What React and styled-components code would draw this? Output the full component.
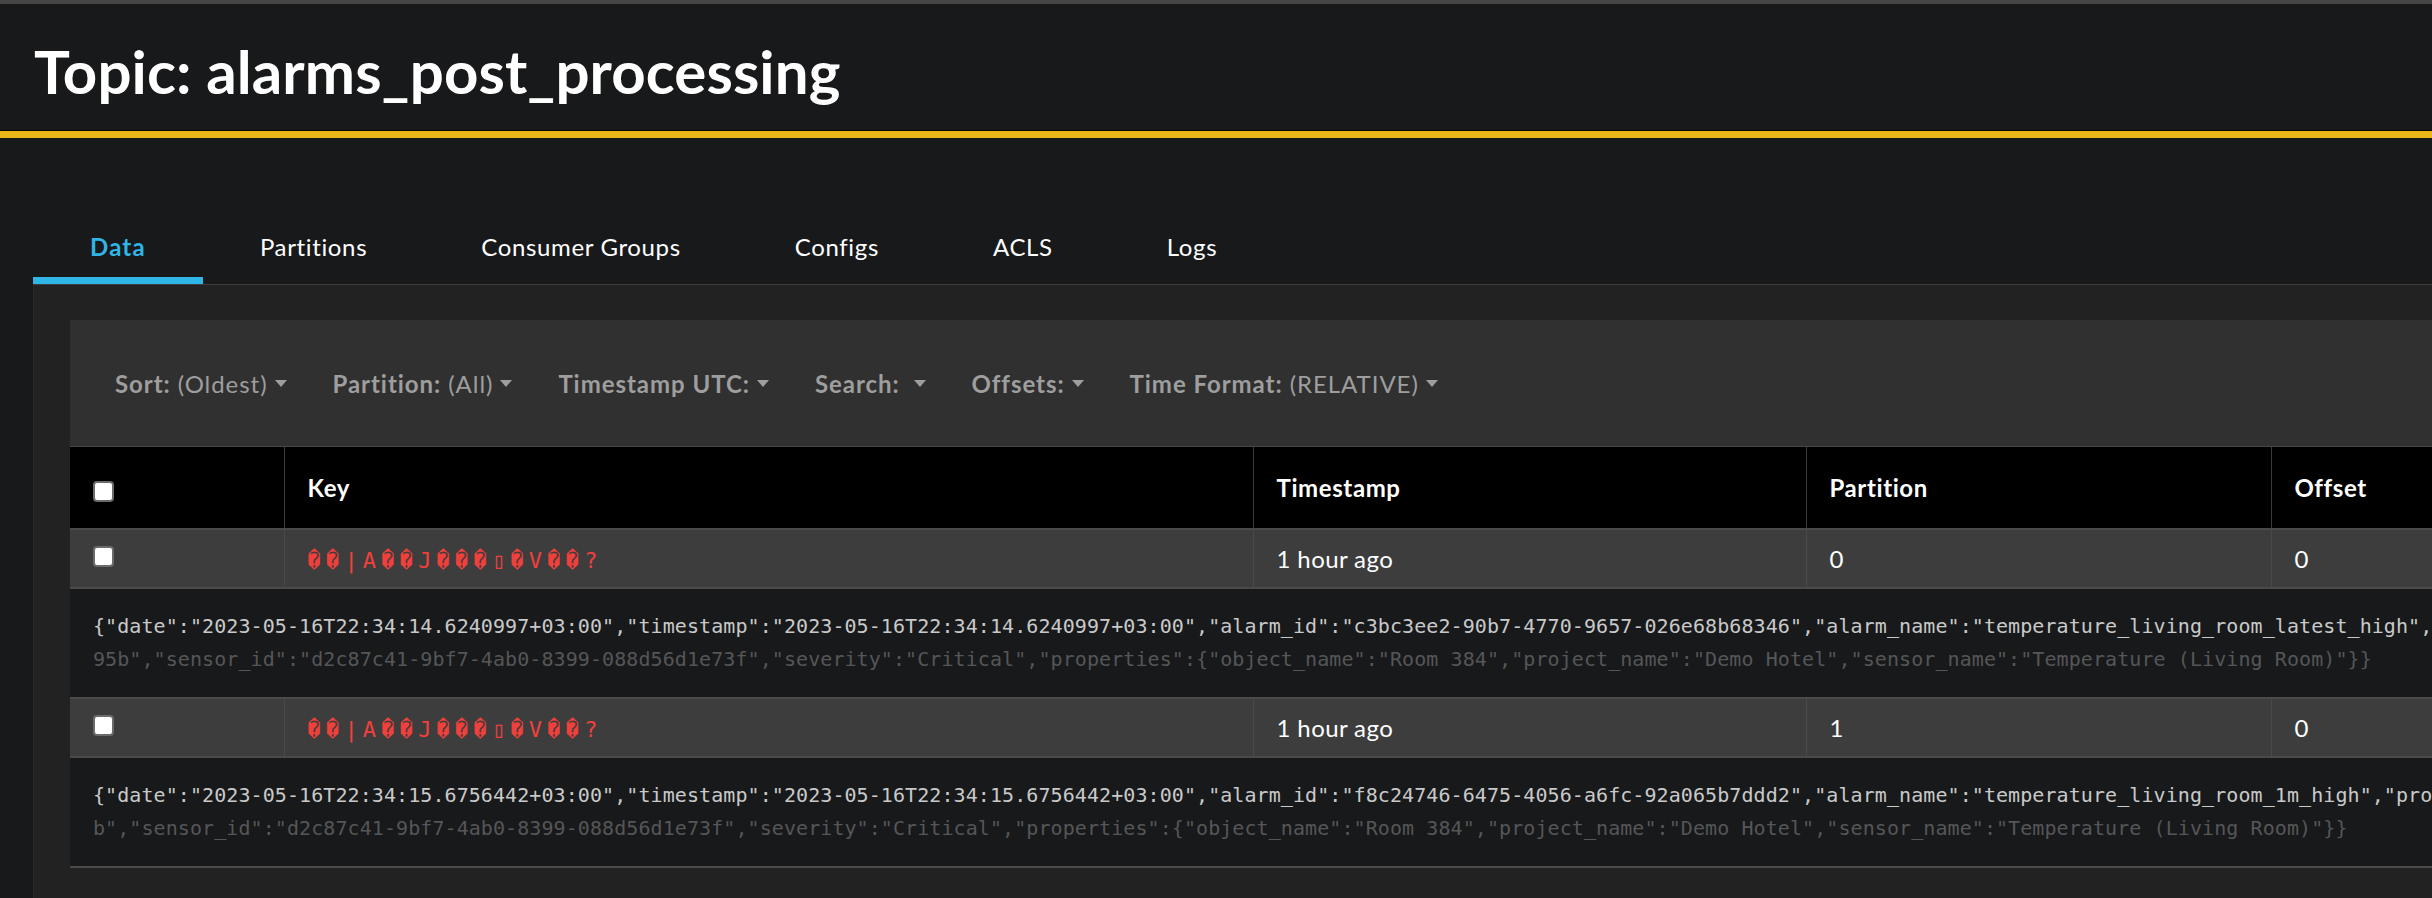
import styled, { createGlobalStyle } from 'styled-components';

const GlobalStyle = createGlobalStyle`
    html, body {
        margin: 0;
        padding: 0;
        background: #18191b;
        overflow: hidden;
    }
    body {
        font-family: "Segoe UI", Lato, "Open Sans", sans-serif;
        color: #fff;
    }
`;

const Page = styled.div`
    width: 2800px;
    min-height: 898px;
    display: flex;
    flex-direction: column;
    background: #18191b;
`;

const Header = styled.header`
    border-top: 4px solid #464646;
    padding: 31px 34px 23px;
    border-bottom: 1px solid #050505;
    box-shadow: 0 7px 0 #ebb517;
    margin-bottom: 7px;
`;

const Title = styled.h1`
    margin: 0;
    font-size: 60px;
    line-height: 72px;
    font-weight: 700;
    letter-spacing: 0.1px;
    color: #fff;
`;

const Content = styled.main`
    flex: 1;
    display: flex;
    flex-direction: column;
    padding: 79px 0 0 33px;
`;

const Tabs = styled.nav`
    display: flex;
`;

const Tab = styled.a`
    padding: 12px 57px;
    font-size: 24px;
    line-height: 36px;
    letter-spacing: ${p => (p.$active ? '1.2px' : '0.65px')};
    font-weight: ${p => (p.$active ? 700 : 400)};
    color: ${p => (p.$active ? '#2fb5e6' : '#fff')};
    border-bottom: 7px solid ${p => (p.$active ? '#2fb5e6' : 'transparent')};
    cursor: pointer;
`;

const Panel = styled.section`
    flex: 1;
    background: #222222;
    border-top: 1px solid #3c3c3c;
    border-left: 1px solid #2a2a2a;
    padding: 35px 0 32px 36px;
`;

const Card = styled.div`
    background: #303030;
`;

const FilterBar = styled.div`
    display: flex;
    align-items: center;
    gap: 46px;
    height: 126px;
    padding: 0 45px;
    border-bottom: 1px solid #454545;
`;

const Filter = styled.div`
    display: flex;
    align-items: center;
    font-size: 24px;
    letter-spacing: 0.95px;
    color: #9e9e9e;
    white-space: pre;
`;

const FilterLabel = styled.span`
    font-weight: 700;
`;

const Caret = styled.span`
    margin-left: ${p => (p.$wide ? '14px' : '7px')};
    width: 0;
    height: 0;
    border-top: 7px solid #9e9e9e;
    border-left: 6.5px solid transparent;
    border-right: 6.5px solid transparent;
`;

const Table = styled.table`
    width: 100%;
    border-collapse: collapse;
    table-layout: fixed;
`;

const HeadCell = styled.th`
    height: 81px;
    padding: 0 23px;
    background: #000;
    color: #fff;
    font-size: 24px;
    font-weight: 700;
    letter-spacing: 0.6px;
    text-align: left;
    vertical-align: middle;
    border-left: 1px solid #3a3a3a;
    border-bottom: 2px solid #4a4a4a;
    &:first-child { border-left: none; }
`;

const Cell = styled.td`
    height: 57px;
    padding: 0 23px;
    background: #3d3d3d;
    color: #fff;
    font-size: 24px;
    letter-spacing: 0.4px;
    vertical-align: middle;
    border-left: 1px solid #4a4a4a;
    border-bottom: 2px solid #4a4a4a;
    &:first-child { border-left: none; }
`;

const MessageCell = styled.td`
    padding: 21px 23px;
    background: #18191b;
    border-bottom: 2px solid #4a4a4a;
`;

const MessageLine = styled.div`
    font-family: "DejaVu Sans Mono", "Liberation Mono", monospace;
    font-size: 20px;
    line-height: 33px;
    letter-spacing: 0.08px;
    white-space: nowrap;
    overflow: hidden;
    color: ${p => (p.$faded ? '#555657' : '#c9c9c9')};
`;

const KeyText = styled.code`
    font-family: "DejaVu Sans Mono", "Liberation Mono", monospace;
    font-size: 22px;
    letter-spacing: 5.2px;
    color: #f0403c;
`;

const Check = styled.input.attrs({ type: 'checkbox' })`
    appearance: none;
    display: block;
    margin: ${p => (p.$head ? '8px 0 0' : '-4px 0 0')};
    width: 21px;
    height: 21px;
    background: #fff;
    border: 2px solid #6b6b6b;
    border-radius: 4px;
`;

const filters = [
    { label: 'Sort:', value: ' (Oldest)' },
    { label: 'Partition:', value: ' (All)' },
    { label: 'Timestamp UTC:', value: '' },
    { label: 'Search:', value: '', wide: true },
    { label: 'Offsets:', value: '' },
    { label: 'Time Format:', value: ' (RELATIVE)' },
];

const tabs = ['Data', 'Partitions', 'Consumer Groups', 'Configs', 'ACLS', 'Logs'];

const KEY = '\uFFFD\uFFFD|A\uFFFD\uFFFDJ\uFFFD\uFFFD\uFFFD\u25AF\uFFFDV\uFFFD\uFFFD?';

const messages = [
    {
        partition: 0,
        offset: 0,
        lines: [
            '{"date":"2023-05-16T22:34:14.6240997+03:00","timestamp":"2023-05-16T22:34:14.6240997+03:00","alarm_id":"c3bc3ee2-90b7-4770-9657-026e68b68346","alarm_name":"temperature_living_room_latest_high","object_id":"7a41e0d2-5c3b-4f19-8e62-1b0c9d4a3',
            '95b","sensor_id":"d2c87c41-9bf7-4ab0-8399-088d56d1e73f","severity":"Critical","properties":{"object_name":"Room 384","project_name":"Demo Hotel","sensor_name":"Temperature (Living Room)"}}',
        ],
    },
    {
        partition: 1,
        offset: 0,
        lines: [
            '{"date":"2023-05-16T22:34:15.6756442+03:00","timestamp":"2023-05-16T22:34:15.6756442+03:00","alarm_id":"f8c24746-6475-4056-a6fc-92a065b7ddd2","alarm_name":"temperature_living_room_1m_high","project_id":"4be2a81c-93d0-4c7e-b5a6-e02f17c8d9',
            'b","sensor_id":"d2c87c41-9bf7-4ab0-8399-088d56d1e73f","severity":"Critical","properties":{"object_name":"Room 384","project_name":"Demo Hotel","sensor_name":"Temperature (Living Room)"}}',
        ],
    },
];

export default function App() {
    return (
        <>
            <GlobalStyle />
            <Page>
                <Header>
                    <Title>Topic: alarms_post_processing</Title>
                </Header>
                <Content>
                    <Tabs>
                        {tabs.map((t, i) => (
                            <Tab key={t} $active={i === 0}>{t}</Tab>
                        ))}
                    </Tabs>
                    <Panel>
                        <Card>
                            <FilterBar>
                                {filters.map(f => (
                                    <Filter key={f.label}>
                                        <FilterLabel>{f.label}</FilterLabel>
                                        {f.value}
                                        <Caret $wide={f.wide} />
                                    </Filter>
                                ))}
                            </FilterBar>
                            <Table>
                                <colgroup>
                                    <col style={{ width: 214 }} />
                                    <col style={{ width: 969 }} />
                                    <col style={{ width: 553 }} />
                                    <col style={{ width: 465 }} />
                                    <col />
                                </colgroup>
                                <thead>
                                    <tr>
                                        <HeadCell><Check $head /></HeadCell>
                                        <HeadCell>Key</HeadCell>
                                        <HeadCell>Timestamp</HeadCell>
                                        <HeadCell>Partition</HeadCell>
                                        <HeadCell>Offset</HeadCell>
                                    </tr>
                                </thead>
                                <tbody>
                                    {messages.map((m, i) => (
                                        <>
                                            <tr key={'r' + i}>
                                                <Cell><Check /></Cell>
                                                <Cell><KeyText>{KEY}</KeyText></Cell>
                                                <Cell>1 hour ago</Cell>
                                                <Cell>{m.partition}</Cell>
                                                <Cell>{m.offset}</Cell>
                                            </tr>
                                            <tr key={'m' + i}>
                                                <MessageCell colSpan={5}>
                                                    <MessageLine>{m.lines[0]}</MessageLine>
                                                    <MessageLine $faded>{m.lines[1]}</MessageLine>
                                                </MessageCell>
                                            </tr>
                                        </>
                                    ))}
                                </tbody>
                            </Table>
                        </Card>
                    </Panel>
                </Content>
            </Page>
        </>
    );
}
